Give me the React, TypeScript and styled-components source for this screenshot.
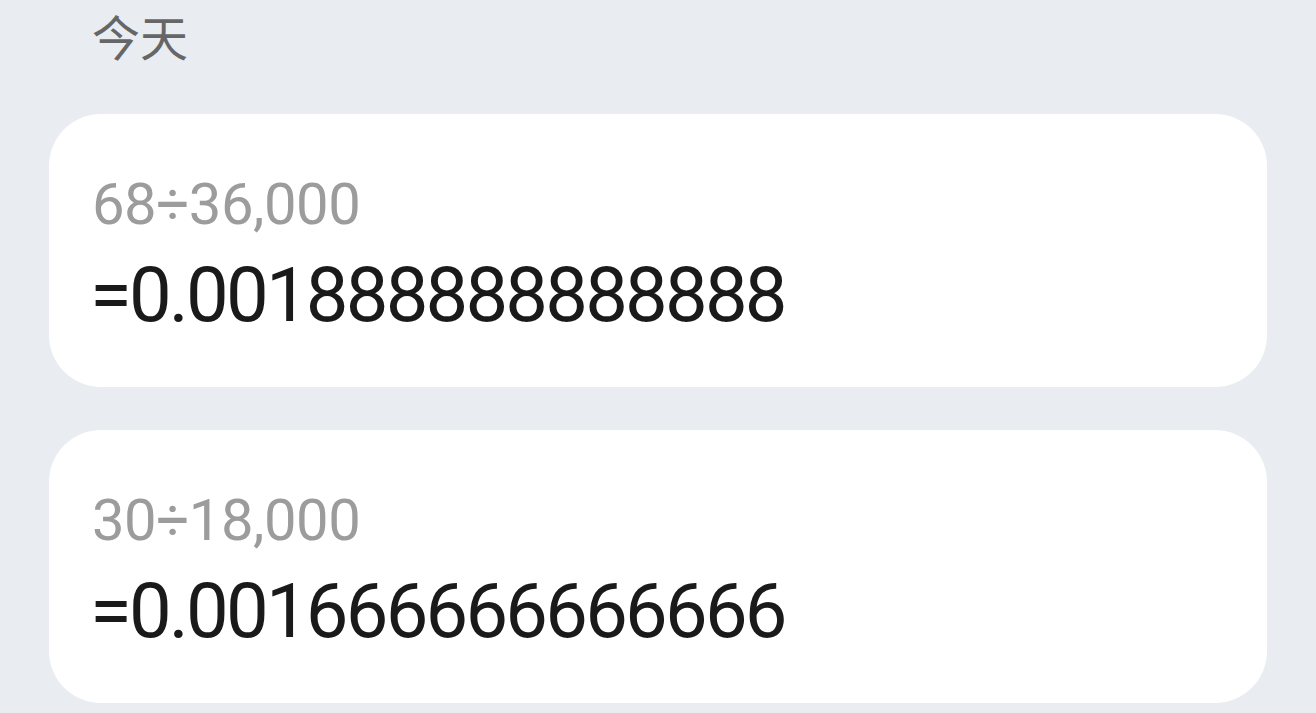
import styled, { createGlobalStyle } from "styled-components";

const GlobalStyle = createGlobalStyle`
    html, body {
        margin: 0;
        padding: 0;
        background-color: #e9ecf1;
    }
    body {
        font-family: Roboto, "Noto Sans CJK SC", sans-serif;
    }
`;

interface IRecord {
    expression: string;
    result: string;
}

const records: IRecord[] = [
    { expression: "68÷36,000", result: "=0.001888888888888" },
    { expression: "30÷18,000", result: "=0.001666666666666" },
];

const Page = styled.div`
    width: 1316px;
    height: 713px;
    overflow: hidden;
    box-sizing: border-box;
    padding: 0 49px;
    display: flex;
    flex-direction: column;
    gap: 43px;
`;

const DayTitle = styled.h2`
    margin: 0;
    padding: 6px 0 0 43px;
    height: 71px;
    box-sizing: border-box;
    font-family: "Noto Sans CJK SC", sans-serif;
    font-weight: 400;
    font-size: 48px;
    line-height: 58px;
    color: #666666;
`;

const Card = styled.div`
    background-color: #ffffff;
    border-radius: 52px;
    height: 273px;
    box-sizing: border-box;
    padding: 60px 43px 0;
    display: flex;
    flex-direction: column;
    flex-shrink: 0;
`;

const Expression = styled.p`
    margin: 0;
    font-size: 58px;
    line-height: 60px;
    color: #9c9c9c;
    letter-spacing: -0.5px;
`;

const Result = styled.p`
    margin: 21px 0 0 -2px;
    font-size: 76px;
    line-height: 80px;
    color: #1a1a1a;
    letter-spacing: -2.8px;
`;

export default function App() {
    return <>
        <GlobalStyle />
        <Page>
            <DayTitle>今天</DayTitle>
            {records.map(r => (
                <Card key={r.expression}>
                    <Expression>{r.expression}</Expression>
                    <Result>{r.result}</Result>
                </Card>
            ))}
        </Page>
    </>;
}
